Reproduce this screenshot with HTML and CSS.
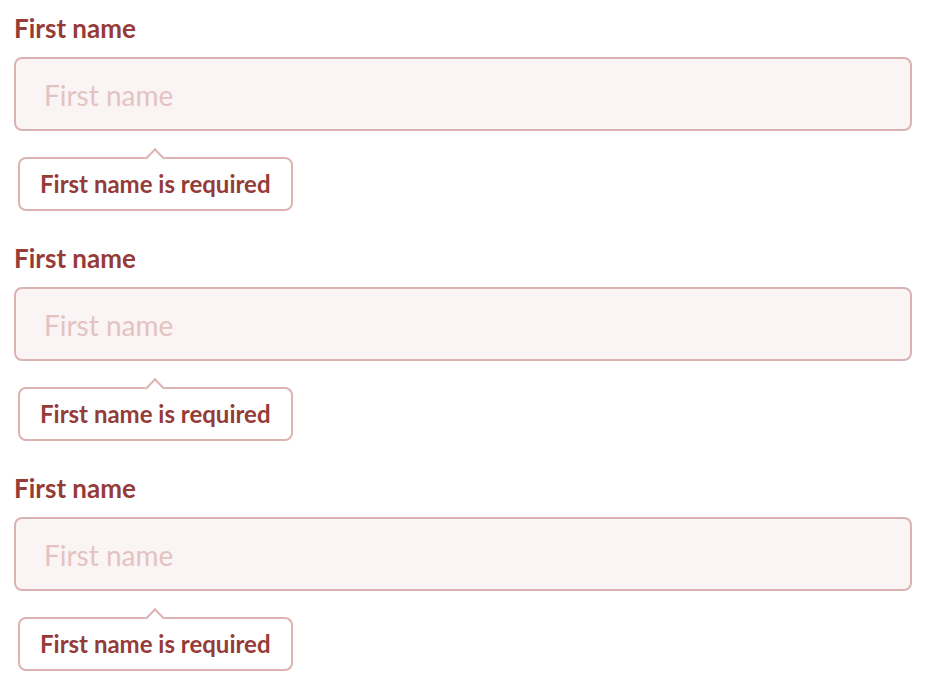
FILE: index.html
```html
<!DOCTYPE html>
<html lang="en">
<head>
<meta charset="utf-8">
<title>Form errors</title>
<link rel="stylesheet" href="styles.css">
</head>
<body>
<form class="form">
  <div class="field">
    <label class="field-label" for="f1">First name</label>
    <input class="input" id="f1" type="text" placeholder="First name">
    <div class="prompt">First name is required</div>
  </div>
  <div class="field">
    <label class="field-label" for="f2">First name</label>
    <input class="input" id="f2" type="text" placeholder="First name">
    <div class="prompt">First name is required</div>
  </div>
  <div class="field">
    <label class="field-label" for="f3">First name</label>
    <input class="input" id="f3" type="text" placeholder="First name">
    <div class="prompt">First name is required</div>
  </div>
</form>
</body>
</html>
```
FILE: styles.css
```css
html, body {
  margin: 0;
  padding: 0;
  background: #ffffff;
}
body {
  font-family: Lato, "Noto Sans", sans-serif;
}
.form {
  padding: 10px 18px 0 14px;
}
.field {
  display: flex;
  flex-direction: column;
  align-items: flex-start;
  height: 230px;
}
.field-label {
  display: block;
  font-size: 26px;
  font-weight: 700;
  line-height: 37px;
  color: #953b38;
  margin-bottom: 10px;
}
.input {
  box-sizing: border-box;
  width: 100%;
  height: 74px;
  margin: 0;
  padding: 1px 28px 0;
  border: 2px solid #dcb3b3;
  border-radius: 8px;
  background: #fbf4f4;
  color: #953b38;
  font-family: Lato, "Noto Sans", sans-serif;
  font-size: 28px;
  outline: none;
}
.input::placeholder {
  color: #e3c3c2;
  opacity: 1;
}
.prompt {
  position: relative;
  box-sizing: border-box;
  height: 54px;
  margin: 26px 0 0 4px;
  padding: 0 20px;
  border: 2px solid #dcb3b3;
  border-radius: 8px;
  background: #ffffff;
  color: #953b38;
  font-size: 24px;
  font-weight: 700;
  line-height: 50px;
}
.prompt::before {
  content: "";
  position: absolute;
  box-sizing: border-box;
  top: -8px;
  left: 50%;
  width: 14px;
  height: 14px;
  margin-left: -7px;
  background: #ffffff;
  border-top: 2px solid #dcb3b3;
  border-left: 2px solid #dcb3b3;
  transform: rotate(45deg);
}
```
